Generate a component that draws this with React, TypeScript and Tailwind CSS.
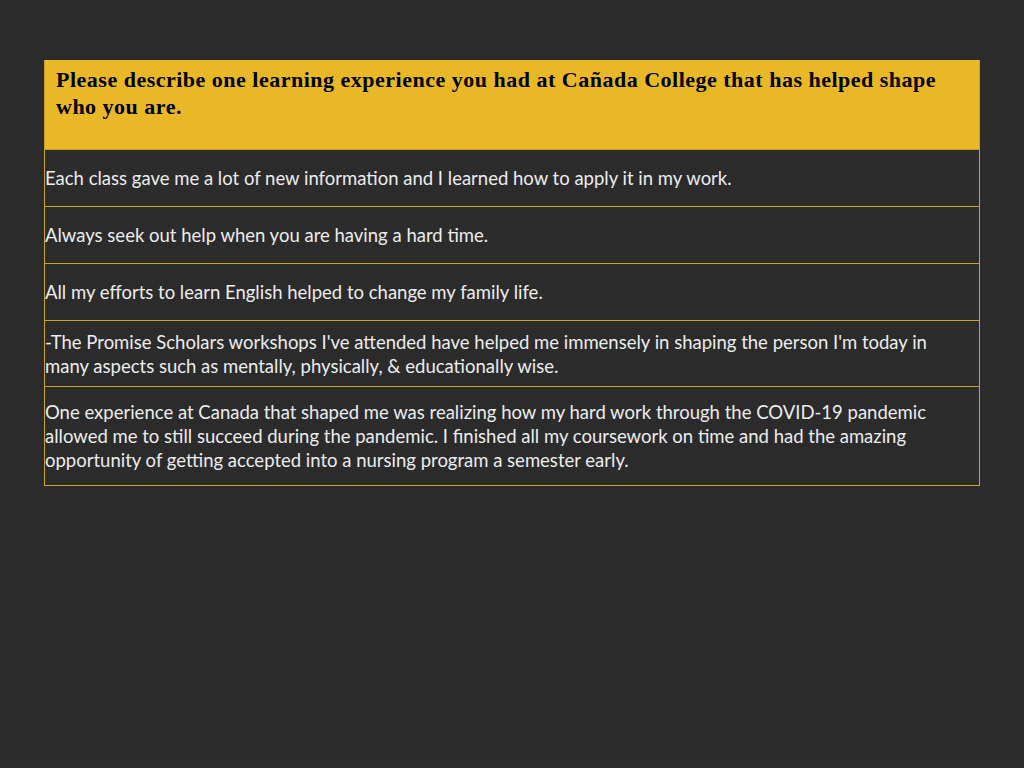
const rows: { text: string; h: string }[] = [
  { text: "Each class gave me a lot of new information and I learned how to apply it in my work.", h: "h-[57px]" },
  { text: "Always seek out help when you are having a hard time.", h: "h-[57px]" },
  { text: "All my efforts to learn English helped to change my family life.", h: "h-[57px]" },
  {
    text: "-The Promise Scholars workshops I've attended have helped me immensely in shaping the person I'm today in many aspects such as mentally, physically, & educationally wise.",
    h: "h-[66px]",
  },
  {
    text: "One experience at Canada that shaped me was realizing how my hard work through the COVID-19 pandemic allowed me to still succeed during the pandemic. I finished all my coursework on time and had the amazing opportunity of getting accepted into a nursing program a semester early.",
    h: "h-[99px]",
  },
];

export default function App() {
  return (
    <main className="w-[1024px] h-[768px] bg-[#2b2b2c] pt-[60px] pl-[44px]">
      <div className="w-[936px] border-l border-r border-b border-[#c7a12c]">
        <div className="h-[89px] bg-[#e9b826] pl-[11px] pr-[20px] pt-[6px]">
          <h1 className="font-['Liberation_Serif',serif] font-bold text-[22px] leading-[27px] tracking-[0.5px] text-black">
            Please describe one learning experience you had at Cañada College that has helped shape who you are.
          </h1>
        </div>
        {rows.map((r, i) => (
          <div
            key={i}
            className={`${r.h} flex items-center border-t border-[#c7a12c] pr-10 font-['Lato',sans-serif] text-[18.5px] leading-[24px] text-[#ececec]`}
          >
            <p>{r.text}</p>
          </div>
        ))}
      </div>
    </main>
  );
}
